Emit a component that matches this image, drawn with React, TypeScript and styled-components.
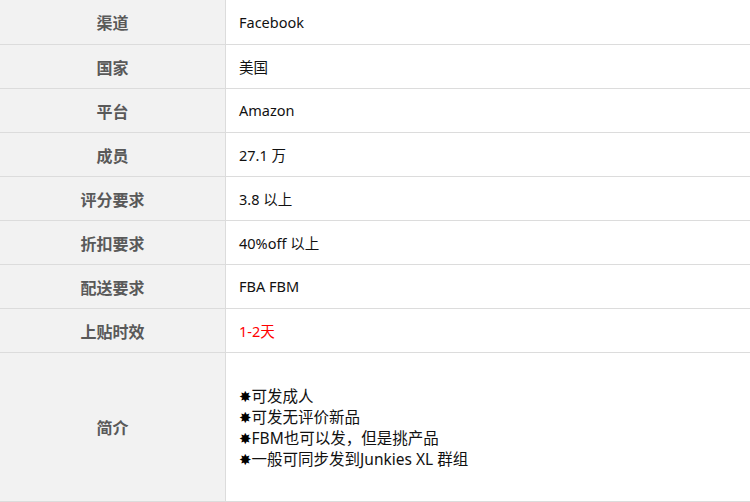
import React from 'react';
import styled, { createGlobalStyle } from 'styled-components';

const Global = createGlobalStyle`
  body {
    margin: 0;
    background: #fff;
    font-family: "Noto Sans", "Noto Sans CJK SC", sans-serif;
  }
`;

type Item = {
  label: string;
  value: React.ReactNode;
  red?: boolean;
};

const items: Item[] = [
  { label: '渠道', value: 'Facebook' },
  { label: '国家', value: '美国' },
  { label: '平台', value: 'Amazon' },
  { label: '成员', value: '27.1 万' },
  { label: '评分要求', value: '3.8 以上' },
  { label: '折扣要求', value: '40%off 以上' },
  { label: '配送要求', value: 'FBA FBM' },
  { label: '上贴时效', value: '1-2天', red: true },
];

const notes = [
  '可发成人',
  '可发无评价新品',
  'FBM也可以发，但是挑产品',
  '一般可同步发到Junkies XL 群组',
];

export default function App(): JSX.Element {
  return (
    <>
      <Global />
      <Table>
        {items.map((it, i) => (
          <Row key={it.label} $height={i === 0 ? 45 : 44}>
            <Label>{it.label}</Label>
            <Value $red={it.red}>{it.value}</Value>
          </Row>
        ))}
        <Row $height={149}>
          <Label>简介</Label>
          <Value>
            <Notes>
              {notes.map((n) => (
                <Note key={n}>
                  <Star>✸</Star>
                  {n}
                </Note>
              ))}
            </Notes>
          </Value>
        </Row>
      </Table>
    </>
  );
}

const Table = styled.div`
  width: 750px;
  display: flex;
  flex-direction: column;
`;

const Row = styled.div<{ $height: number }>`
  display: grid;
  grid-template-columns: 226px 1fr;
  height: ${(p) => p.$height}px;
  box-sizing: border-box;
  border-bottom: 1px solid #dcdcdc;
`;

const Label = styled.div`
  background: #f2f2f2;
  border-right: 1px solid #dcdcdc;
  display: flex;
  align-items: center;
  justify-content: center;
  font-size: 16px;
  font-weight: 700;
  color: #595959;
`;

const Value = styled.div<{ $red?: boolean }>`
  display: flex;
  align-items: center;
  padding-left: 13px;
  padding-bottom: 1px;
  font-size: 14.5px;
  color: ${(p) => (p.$red ? '#ff0000' : '#111')};
`;

const Notes = styled.ul`
  list-style: none;
  margin: 0;
  padding: 3px 0 0;
  font-size: 15.5px;
`;

const Note = styled.li`
  height: 21px;
  line-height: 21px;
  white-space: nowrap;
`;

const Star = styled.span`
  font-family: "DejaVu Sans", sans-serif;
  font-size: 15px;
  font-weight: 700;
  color: #000;
`;
